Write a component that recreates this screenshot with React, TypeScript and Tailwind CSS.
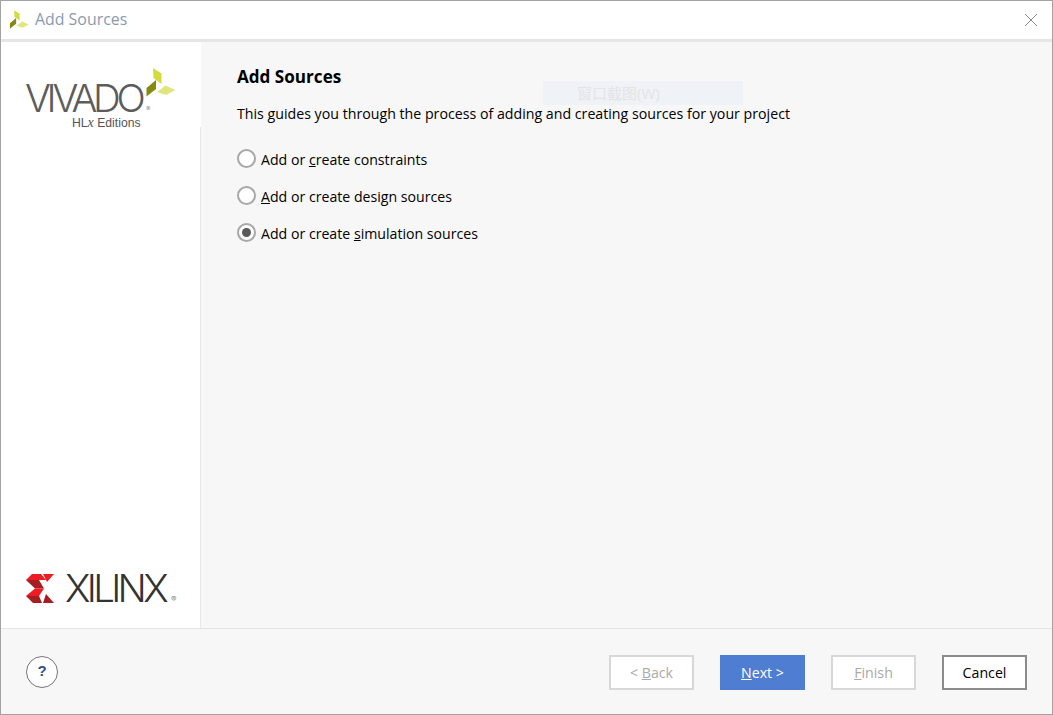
import type { ReactNode } from "react";

const Mark = ({ className }: { className: string }) => (
  <svg viewBox="0 0 31 31" className={className}>
    <polygon points="8,2 16.5,7.5 16.5,18 8.5,12" fill="#d2dc3c" />
    <polygon points="1.5,22 11,14 11,23 1.5,30.5" fill="#858a10" />
    <polygon points="12,26 20.5,19.5 30.5,24 21,29" fill="#dfe67e" />
  </svg>
);

const XilinxMark = () => (
  <svg viewBox="0 0 28 29" className="w-[28px] h-[29px] shrink-0">
    <polygon points="17,0 28,0 21,8" fill="#ed1c24" />
    <polygon points="0,6 6,0 15,0 20,6" fill="#ed1c24" />
    <polygon points="0,6 13,6 18,14.5 9,14.5" fill="#a61d22" />
    <polygon points="9,14.5 18,14.5 13,22 0,22" fill="#ed1c24" />
    <polygon points="0,22 13,22 16,29 7,29" fill="#a61d22" />
    <polygon points="17,29 28,29 20,20" fill="#a61d22" />
  </svg>
);

const Radio = ({ u, before, after, checked }: { u: string; before: string; after: string; checked?: boolean }) => (
  <div className="flex items-center h-[37px] gap-[5px]">
    <span className="w-[19px] h-[19px] -mt-[2px] rounded-full border-2 border-[#a8a8a8] bg-white flex items-center justify-center">
      {checked && <span className="w-[9px] h-[9px] rounded-full bg-[#5a5a5a]" />}
    </span>
    <span className="text-[14.15px] text-black">
      {before}
      <span className="underline">{u}</span>
      {after}
    </span>
  </div>
);

const Btn = ({ children, className }: { children: ReactNode; className: string }) => (
  <button className={`w-[85px] h-[35px] pt-[2px] text-[14.2px] flex items-center justify-center ${className}`}>{children}</button>
);

export default function App() {
  return (
    <div className="relative w-[1053px] h-[715px] border border-[#a3a3a3] flex flex-col bg-white overflow-hidden font-['Open_Sans','Noto_Sans_CJK_SC',sans-serif]">
      <div className="h-[38px] flex items-center pl-[8px] pr-[14px] bg-white shrink-0">
        <Mark className="w-[20px] h-[20px] -mt-[2px]" />
        <span className="ml-[6px] text-[15.9px] text-[#8a9bb0]">Add Sources</span>
        <svg viewBox="0 0 14 14" className="ml-auto w-[14px] h-[14px]">
          <path d="M1 1L13 13M13 1L1 13" stroke="#8a8a8a" strokeWidth="1" />
        </svg>
      </div>
      <div className="h-[3px] bg-[#e6e6e6] shrink-0" />

      <div className="flex-1 flex min-h-0">
        <aside className="w-[200px] shrink-0 bg-white flex flex-col">
          <div className="relative h-[85px] shrink-0 pl-[24px] pt-[42px]">
            <div className="flex items-end h-[28px] font-['Inter',sans-serif] text-[38.5px] leading-[28px] font-light tracking-[-4.3px] text-[#5c5c5c]">
              VIVADO
              <span className="ml-[5px] text-[6px] leading-[6px] tracking-normal">®</span>
            </div>
            <div className="mt-[5px] ml-[47px] font-['Liberation_Sans',sans-serif] text-[12.2px] leading-[12px] text-[#555]">
              HL<i className="font-['Liberation_Serif',serif] text-[14px] leading-[12px]">x</i> Editions
            </div>
            <Mark className="absolute left-[144px] top-[24px] w-[31px] h-[31px]" />
          </div>
          <div className="flex-1 border-r border-[#e8e8e8] flex flex-col justify-end pl-[25px] pb-[25px]">
            <div className="flex items-center gap-[11px]">
              <XilinxMark />
              <div className="flex items-end font-['Inter',sans-serif] text-[38.5px] leading-[30px] font-[350] tracking-[-3.7px] text-[#333]">
                XILINX
                <span className="ml-[6px] text-[8px] leading-[8px] tracking-normal text-[#666]">®</span>
              </div>
            </div>
          </div>
        </aside>

        <main className="relative flex-1 bg-[#f7f7f7] pl-[36px] pt-[24px]">
          <h1 className="text-[17.1px] leading-[22px] font-bold text-black">Add Sources</h1>
          <p className="mt-[16px] text-[14.2px] leading-[20px] text-black">This guides you through the process of adding and creating sources for your project</p>
          <div className="mt-[17px]">
            <Radio before="Add or " u="c" after="reate constraints" />
            <Radio before="" u="A" after="dd or create design sources" />
            <Radio before="Add or create " u="s" after="imulation sources" checked />
          </div>
          <div className="absolute left-[342px] top-[39px] w-[200px] h-[24px] bg-[#eff2f7] pl-[34px] text-[15px] leading-[24px] text-[#e4e4e4]">
            窗口截图(W)
          </div>
        </main>
      </div>

      <footer className="h-[86px] shrink-0 bg-[#f7f7f7] border-t border-[#e4e4e4] flex items-center pl-[25px] pr-[25px]">
        <button className="w-[32px] h-[32px] rounded-full border border-[#777] bg-white text-[#2f4f8f] font-bold text-[15px] font-['Liberation_Sans',sans-serif] flex items-center justify-center">
          ?
        </button>
        <div className="ml-auto flex gap-[26px] mt-[1px]">
          <Btn className="bg-white border-2 border-[#d8d8d8] text-[#aaaaaa]">
            &lt;&nbsp;<span className="underline">B</span>ack
          </Btn>
          <Btn className="bg-[#4f7dd1] text-white">
            <span className="underline">N</span>ext &gt;
          </Btn>
          <Btn className="bg-white border-2 border-[#d8d8d8] text-[#aaaaaa]">
            <span className="underline">F</span>inish
          </Btn>
          <Btn className="bg-white border-2 border-[#8c8c8c] text-black">Cancel</Btn>
        </div>
      </footer>
    </div>
  );
}
